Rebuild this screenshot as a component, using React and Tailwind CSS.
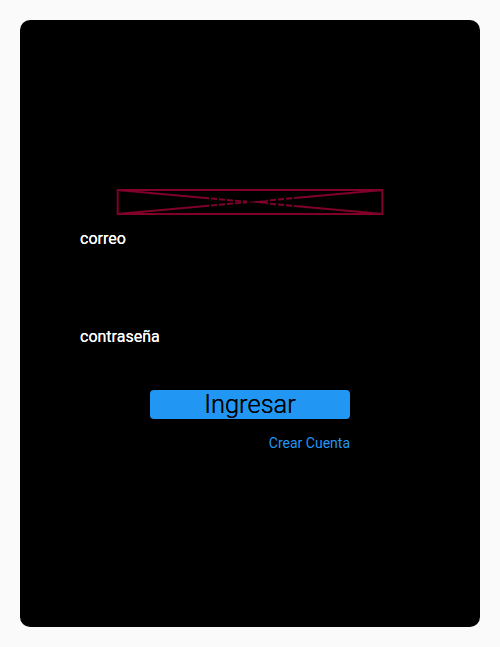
export default function App() {
  return (
    <div className="h-[647px] w-[500px] bg-[#fafafa] p-5 font-['Roboto',sans-serif]">
      <div className="flex h-[607px] flex-col rounded-[10px] bg-black px-[60px] pt-[169px]">
        {/* broken logo image */}
        <svg className="ml-[36px] block h-[26px] w-[268px] shrink-0" viewBox="0 0 268 26" fill="none" stroke="#80002a" aria-hidden="true">
          <rect x="1.67" y="1" width="264.67" height="24" strokeWidth="2" />
          <path d="M1 1L87 8.8M267 25L184 17.5M267 1L184 8.5M1 25L87 17.2" strokeWidth="2" />
          <path d="M87 8.8L131 12.7M184 17.5L151 14.5M184 8.5L151 11.5M87 17.2L131 13.3" strokeWidth="2" strokeDasharray="6 2" />
          <path d="M131 13L151 11.2V14.8Z" fill="#80002a" stroke="none" />
        </svg>

        <form className="mt-[14px] flex flex-col">
          <label htmlFor="correo" className="h-[19px] text-base leading-[19px] text-white [text-shadow:0_0_0.6px_white]">correo</label>
          <input id="correo" type="email" className="mt-1 h-[75px] bg-transparent text-white outline-none" />

          <label htmlFor="clave" className="h-[19px] text-base leading-[19px] text-white [text-shadow:0_0_0.6px_white]">contraseña</label>
          <input id="clave" type="password" className="mt-1 h-[27px] bg-transparent text-white outline-none" />

          <button type="button" className="mx-auto mt-[13px] h-[29px] w-[200px] rounded-[4px] bg-[#2196f3] text-[25.5px] font-light leading-[29px] text-black [text-shadow:0_0_0.6px_black]">
            Ingresar
          </button>

          <div className="mx-auto mt-[15px] flex w-[200px] justify-end">
            <a href="#" className="text-sm leading-[18px] text-[#2196f3]">Crear Cuenta</a>
          </div>
        </form>
      </div>
    </div>
  );
}
